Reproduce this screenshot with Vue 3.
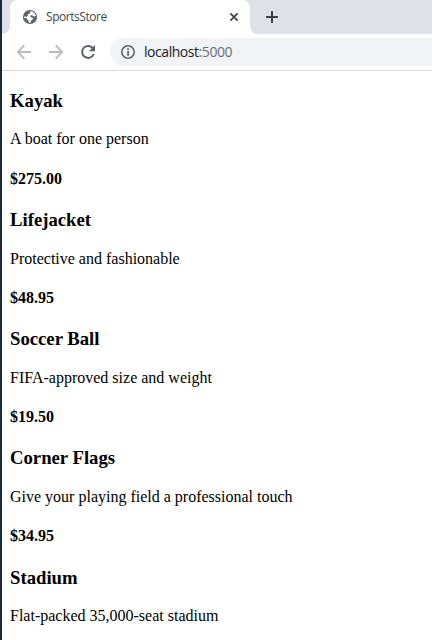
<script setup>
const products = [
  { name: 'Kayak', description: 'A boat for one person', price: '$275.00' },
  { name: 'Lifejacket', description: 'Protective and fashionable', price: '$48.95' },
  { name: 'Soccer Ball', description: 'FIFA-approved size and weight', price: '$19.50' },
  { name: 'Corner Flags', description: 'Give your playing field a professional touch', price: '$34.95' },
  { name: 'Stadium', description: 'Flat-packed 35,000-seat stadium' },
]
</script>

<template>
  <div class="window">
    <header class="tab-strip">
      <div class="strip-start"></div>
      <div class="tab">
        <svg class="globe" width="16" height="16" viewBox="0 0 16 16">
          <circle cx="8" cy="8" r="7.1" fill="#5f6368" />
          <path d="M8.2 2.2C10.8 2 13.4 4 13.8 6.6L12.9 7.5 11.3 7.2 10.2 6.2 8.5 6.3 8.2 7.6 9.8 8.5 11 9 10.8 10.6 9.1 11.6 8.8 13.7 6.5 13.6 6.6 11.7 5.3 10.7 5 9.2 2.2 8.9 2.1 7.6 4.8 7.7 5.8 6.4 6.1 4.9 8 4.5z" fill="#fff" />
        </svg>
        <span class="tab-title">SportsStore</span>
        <svg class="close" width="10" height="10" viewBox="0 0 10 10">
          <path d="M1.4 1.4 8.6 8.6M8.6 1.4 1.4 8.6" stroke="#3c4043" stroke-width="1.7" fill="none" />
        </svg>
      </div>
      <div class="strip-rest">
        <svg width="12" height="12" viewBox="0 0 12 12">
          <path d="M6 0V12M0 6H12" stroke="#3c4043" stroke-width="2" fill="none" />
        </svg>
      </div>
    </header>
    <nav class="toolbar">
      <svg class="nav-icon" width="16" height="16" viewBox="0 0 16 16">
        <path d="M15 8H2M8.2 1.4 1.8 8l6.4 6.6" stroke="#babcbe" stroke-width="1.9" fill="none" />
      </svg>
      <svg class="nav-icon" width="16" height="16" viewBox="0 0 16 16">
        <path d="M1 8h13M7.8 1.4 14.2 8l-6.4 6.6" stroke="#babcbe" stroke-width="1.9" fill="none" />
      </svg>
      <svg class="nav-icon" width="16" height="16" viewBox="0 0 16 16">
        <path d="M13.2 4.6A6 6 0 1 0 13.8 10" stroke="#5f6368" stroke-width="2" fill="none" />
        <path d="M15 1V7.2H8.8z" fill="#5f6368" />
      </svg>
      <div class="address">
        <svg width="14" height="14" viewBox="0 0 14 14">
          <circle cx="7" cy="7" r="6.2" stroke="#5f6368" stroke-width="1.5" fill="none" />
          <path d="M6.2 3.3h1.7v1.6H6.2zM6.2 6.1h1.7v4.6H6.2z" fill="#5f6368" />
        </svg>
        <span class="url">localhost<span class="port">:5000</span></span>
      </div>
    </nav>
    <main class="page">
      <section v-for="product in products" :key="product.name">
        <h3>{{ product.name }}</h3>
        <p>{{ product.description }}</p>
        <h4 v-if="product.price">{{ product.price }}</h4>
      </section>
    </main>
  </div>
</template>

<style>
body { margin: 0; background: #fff; }
</style>

<style scoped>
.window {
  box-sizing: border-box;
  width: 432px;
  height: 640px;
  overflow: hidden;
  border-left: 2px solid #1b2b3c;
  background: #fff;
}
.tab-strip { display: flex; height: 34px; background: #fff; }
.strip-start {
  width: 8px;
  background: #dee1e6;
  border-bottom-right-radius: 8px;
}
.tab {
  box-sizing: border-box;
  display: flex;
  align-items: center;
  width: 240px;
  padding: 0 11px 0 12px;
  border-radius: 8px 8px 0 0;
  background: #fff;
  box-shadow: 0 -8px 0 #dee1e6;
}
.globe { flex: none; }
.tab-title {
  margin-left: 8px;
  font: 12px/16px "Open Sans", sans-serif;
  letter-spacing: -0.45px;
  color: #45494d;
}
.close { margin-left: auto; }
.strip-rest {
  flex: 1;
  display: flex;
  align-items: center;
  padding-left: 16px;
  background: #dee1e6;
  border-bottom-left-radius: 8px;
}
.toolbar {
  box-sizing: border-box;
  display: flex;
  align-items: center;
  height: 37px;
  padding-left: 14px;
  border-bottom: 1px solid #d9dadc;
}
.nav-icon { flex: none; margin-right: 16px; }
.address {
  flex: 1;
  display: flex;
  align-items: center;
  height: 28px;
  margin-left: -2px;
  padding-left: 11px;
  border-radius: 14px 0 0 14px;
  background: #f1f3f4;
}
.url {
  margin-left: 9px;
  font: 14px/20px "Open Sans", sans-serif;
  letter-spacing: -0.45px;
  color: #202124;
}
.port { color: #6b7075; }
.page {
  padding: 0 8px;
  font: 16px/18px "Liberation Serif", serif;
  color: #000;
}
section { display: flow-root; height: 119.15px; }
h3 { margin: 19px 0 18.4px; font-size: 18.72px; line-height: 22px; }
p { margin: 0; }
h4 { margin: 21.28px 0 0; font-size: 16px; }
</style>
